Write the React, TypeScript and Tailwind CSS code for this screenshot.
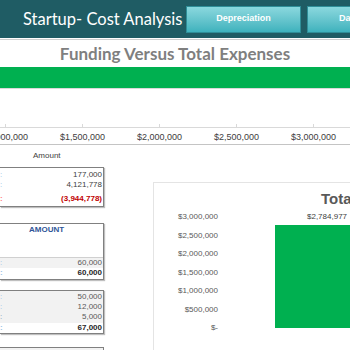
const axisTicks = ["$1,000,000", "$1,500,000", "$2,000,000", "$2,500,000", "$3,000,000"]
const yLabels = ["$3,000,000", "$2,500,000", "$2,000,000", "$1,500,000", "$1,000,000", "$500,000", "$-"]

const num = "font-['Liberation_Sans',Arial,sans-serif]"

export default function App() {
  return (
    <div className="w-[350px] h-[350px] overflow-hidden bg-white flex flex-col font-['Lato',sans-serif]">
      {/* Header */}
      <div className="h-[38px] shrink-0 bg-[#1f5c64] flex items-center">
        <div className="pl-[23px] w-[186px] shrink-0 text-white text-[16.5px] leading-none whitespace-nowrap">
          Startup- Cost Analysis
        </div>
        <button className={`${num} w-[115px] h-[27px] shrink-0 bg-gradient-to-b from-[#8ad8de] to-[#3db2bd] border border-[#2f8e98] text-white text-[9px] font-bold`}>
          Depreciation
        </button>
        <button className={`${num} ml-[6px] w-[115px] h-[27px] shrink-0 bg-gradient-to-b from-[#8ad8de] to-[#3db2bd] border border-[#2f8e98] text-white text-[9px] font-bold text-left pl-[31px]`}>
          Dashboard
        </button>
      </div>
      <div className="h-[2px] shrink-0 border-b border-[#cfcfcf]" />

      {/* Funding title */}
      <div className="h-[27px] shrink-0 flex items-center justify-center text-[#7f7f7f] text-[17px] font-bold">
        Funding Versus Total Expenses
      </div>
      <div className="h-[21px] shrink-0 bg-[#00b050]" />
      <div className="h-[1px] shrink-0 bg-[#d9d9d9]" />

      {/* Horizontal axis */}
      <div className="h-[38px] shrink-0" />
      <div className="relative shrink-0 h-[1px] bg-[#d9d9d9]">
        <div className="flex">
          {axisTicks.map((t, i) => (
            <div key={t} className={`${i === 0 ? "ml-[-33px]" : ""} w-[77px] shrink-0 flex flex-col items-center`}>
              <div className="w-[1px] h-[4px] -mt-[3px] bg-[#d9d9d9]" />
              <div className={`${num} mt-[4px] text-[9px] leading-[10px] text-[#404040] whitespace-nowrap`}>{t}</div>
            </div>
          ))}
        </div>
      </div>
      <div className="h-[16px] shrink-0" />
      <div className="h-[1px] shrink-0 bg-[#c4c4c4]" />

      {/* Lower area */}
      <div className="flex flex-1 min-h-0 overflow-hidden">
        {/* Left tables */}
        <div className={`${num} w-[104px] shrink-0 flex flex-col text-[8px] leading-[10px] text-[#404040]`}>
          <div className="shrink-0 pt-[6px] pl-[33px] h-[22px]">Amount</div>

          <div className="shrink-0 h-[40px] border border-[#808080] border-l-0 shadow-[1px_1px_1px_rgba(0,0,0,0.25)] pt-[2px] pr-[1px] flex flex-col">
            <div className="flex justify-between h-[10px]"><span className="text-[#9dc3e6]">:</span><span>177,000</span></div>
            <div className="flex justify-between h-[10px]"><span className="text-[#9dc3e6]">:</span><span>4,121,778</span></div>
            <div className="flex justify-between h-[10px] mt-[4px] font-bold text-[#c00000]"><span className="text-[#ff7c80]">:</span><span>(3,944,778)</span></div>
          </div>

          <div className="shrink-0 h-[16px]" />
          <div className="shrink-0 h-[57px] border border-[#808080] border-l-0 shadow-[1px_1px_1px_rgba(0,0,0,0.25)] flex flex-col">
            <div className="h-[33px] pl-[29px] pt-[1px] font-bold text-[#2f5597]">AMOUNT</div>
            <div className="h-[11px] bg-[#f2f2f2] border-t border-[#d0d0d0] flex justify-between pr-[1px] text-[#595959]"><span className="text-[#9dc3e6]">:</span><span>60,000</span></div>
            <div className="h-[11px] flex justify-between pr-[1px] font-bold text-[#262626]"><span className="text-[#9dc3e6]">:</span><span>60,000</span></div>
          </div>

          <div className="shrink-0 h-[10px]" />
          <div className="shrink-0 h-[44px] border border-[#808080] border-l-0 shadow-[1px_1px_1px_rgba(0,0,0,0.25)] flex flex-col text-[#595959]">
            <div className="h-[32px] bg-[#f2f2f2] pt-[1px] flex flex-col">
              <div className="h-[10px] flex justify-between pr-[1px]"><span className="text-[#9dc3e6]">:</span><span>50,000</span></div>
              <div className="h-[10px] flex justify-between pr-[1px]"><span className="text-[#9dc3e6]">:</span><span>12,000</span></div>
              <div className="h-[10px] flex justify-between pr-[1px]"><span className="text-[#8497b0]">:</span><span>5,000</span></div>
            </div>
            <div className="h-[10px] flex justify-between pr-[1px] font-bold text-[#262626]"><span className="text-[#9dc3e6]">:</span><span>67,000</span></div>
          </div>

          <div className="shrink-0 h-[13px]" />
          <div className="shrink-0 h-[30px] border border-[#808080] border-l-0 bg-[#f2f2f2] flex justify-end pr-[1px] pt-[1px] text-[#595959]">
            50,000
          </div>
        </div>

        {/* Chart */}
        <div className="ml-[49px] mt-[37px] flex-1 border-l border-t border-[#e4e4e4] flex flex-col">
          <div className="h-[29px] pl-[167px] pt-[8px] text-[15px] leading-[16px] font-bold text-[#595959] whitespace-nowrap font-['Liberation_Sans',Arial,sans-serif]">
            Total Expenses
          </div>
          <div className="flex">
            <div className={`${num} w-[64px] h-[121px] flex flex-col justify-between items-end text-[8px] leading-[10px] text-[#595959]`}>
              {yLabels.map((l) => (
                <div key={l}>{l}</div>
              ))}
            </div>
            <div className="ml-[57px] flex-1 flex flex-col">
              <div className={`${num} pl-[32px] h-[10px] text-[8px] leading-[10px] text-[#404040] whitespace-nowrap`}>$2,784,977</div>
              <div className="mt-[3px] h-[103px] bg-[#00b050]" />
            </div>
          </div>
        </div>
      </div>
    </div>
  )
}
